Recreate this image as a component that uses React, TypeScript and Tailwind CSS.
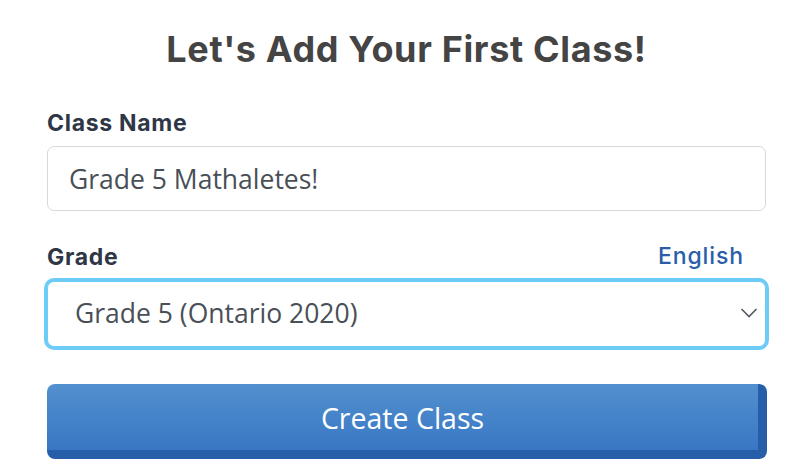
import React, { useState } from 'react';

export default function App() {
  const [className, setClassName] = useState('Grade 5 Mathaletes!');
  const [grade, setGrade] = useState('g5-on-2020');

  return (
    <div className="min-h-screen bg-white">
      <div className="ml-[47px] w-[719px] pt-[25px]">
        <h1 className="text-center font-['Inter',sans-serif] text-[36px] leading-[48px] font-bold tracking-[0.65px] text-[#444444]">
          Let's Add Your First Class!
        </h1>

        {/* class name */}
        <label
          htmlFor="className"
          className="mt-[36px] block font-['Inter',sans-serif] text-[23px] leading-[28px] font-bold tracking-[0.7px] text-[#2f3747]"
        >
          Class Name
        </label>
        <input
          id="className"
          value={className}
          onChange={(e) => setClassName(e.target.value)}
          className="mt-[9px] block h-[65px] w-full rounded-[7px] border border-[#d6d9de] px-[21px] font-['Open_Sans',sans-serif] text-[26.5px] text-[#494f57] outline-none"
        />

        {/* grade */}
        <div className="mt-[30px] flex items-end justify-between">
          <label
            htmlFor="grade"
            className="font-['Inter',sans-serif] text-[23px] leading-[28px] font-bold tracking-[0.7px] text-[#2f3747]"
          >
            Grade
          </label>
          <span className="mr-[22px] font-['Inter',sans-serif] text-[23px] leading-[30px] font-medium tracking-[0.9px] text-[#2b5ea8]">
            English
          </span>
        </div>
        <div className="relative mt-[10px]">
          <select
            id="grade"
            value={grade}
            onChange={(e) => setGrade(e.target.value)}
            className="block h-[66px] w-full appearance-none rounded-[7px] border border-[#6dccf6] bg-white pl-[27px] font-['Open_Sans',sans-serif] text-[26.5px] text-[#494f57] shadow-[0_0_0_3px_#6dccf6] outline-none"
          >
            <option value="g5-on-2020">Grade 5 (Ontario 2020)</option>
            <option value="g6-on-2020">Grade 6 (Ontario 2020)</option>
          </select>
          <svg
            className="pointer-events-none absolute top-[26px] right-[8px] h-[12px] w-[18px]"
            viewBox="0 0 18 12"
            fill="none"
          >
            <path d="M1.5 2 L9 9.5 L16.5 2" stroke="#555a60" strokeWidth="1.6" />
          </svg>
        </div>

        <button
          type="button"
          className="mt-[37px] flex h-[75px] w-[720px] items-center justify-center rounded-[8px] border-r-[9px] border-b-[9px] border-[#265ea9] bg-gradient-to-b from-[#5290cf] to-[#3977c4] pt-[2px] font-['Open_Sans',sans-serif] text-[28.5px] text-white"
        >
          Create Class
        </button>
      </div>
    </div>
  );
}
